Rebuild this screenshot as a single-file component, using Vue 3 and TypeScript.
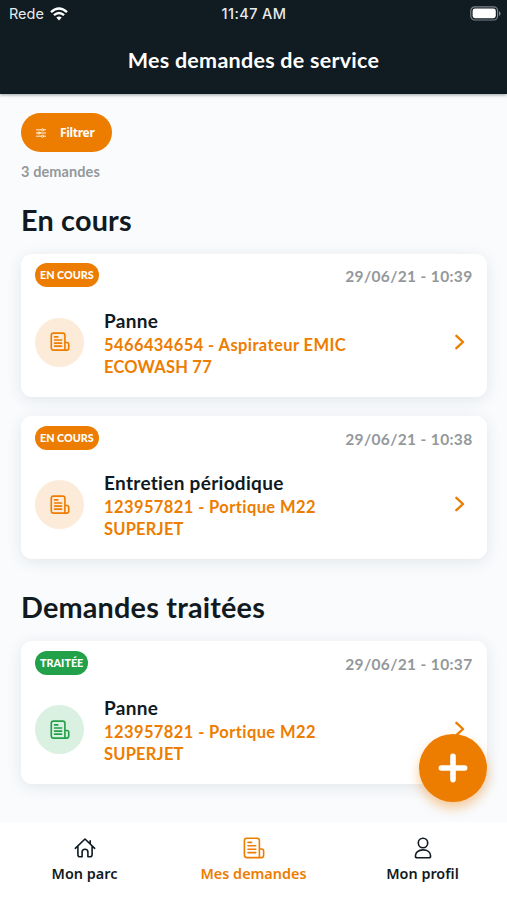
<script setup lang="ts">
interface ServiceRequest {
  id: number
  status: string
  done: boolean
  date: string
  title: string
  reference: string
  model: string
}

interface Section {
  title: string
  items: ServiceRequest[]
}

const sections: Section[] = [
  {
    title: 'En cours',
    items: [
      { id: 1, status: 'EN COURS', done: false, date: '29/06/21 - 10:39', title: 'Panne', reference: '5466434654 - Aspirateur EMIC', model: 'ECOWASH 77' },
      { id: 2, status: 'EN COURS', done: false, date: '29/06/21 - 10:38', title: 'Entretien périodique', reference: '123957821 - Portique M22', model: 'SUPERJET' },
    ],
  },
  {
    title: 'Demandes traitées',
    items: [
      { id: 3, status: 'TRAITÉE', done: true, date: '29/06/21 - 10:37', title: 'Panne', reference: '123957821 - Portique M22', model: 'SUPERJET' },
    ],
  },
]
</script>

<template>
  <div class="screen">
    <header class="header">
      <div class="status">
        <div class="carrier">
          <span>Rede</span>
          <svg class="wifi" viewBox="0 0 18 14" width="18" height="14">
            <path d="M1 5.1Q9-2.1 17 5.1" /><path d="M3.9 8.2Q9 3.7 14.1 8.2" />
            <path class="dot" d="M6.3 10.6Q9 8.3 11.7 10.6L9 13.5Z" />
          </svg>
        </div>
        <span class="clock">11:47 AM</span>
        <svg class="battery" viewBox="0 0 31 15" width="31" height="15">
          <rect class="shell" x=".8" y=".8" width="26.8" height="13.2" rx="4" />
          <rect class="charge" x="2.6" y="2.6" width="23.2" height="9.6" rx="2.4" />
          <path class="tip" d="M29 5q1.6 1 1.6 2.5T29 10Z" />
        </svg>
      </div>
      <h1>Mes demandes de service</h1>
    </header>

    <main class="content">
      <button class="filter">
        <svg viewBox="0 0 10 10" width="10" height="10">
          <path d="M0 1.8h10M0 5h10M0 8.2h10" />
          <circle cx="6.6" cy="1.8" r="1.1" /><circle cx="3" cy="5" r="1.1" /><circle cx="6.6" cy="8.2" r="1.1" />
        </svg>
        <span>Filtrer</span>
      </button>
      <p class="count">3 demandes</p>

      <section v-for="section in sections" :key="section.title">
        <h2>{{ section.title }}</h2>
        <article v-for="item in section.items" :key="item.id" class="card" :class="{ done: item.done }">
          <div class="top">
            <span class="badge">{{ item.status }}</span>
            <time>{{ item.date }}</time>
          </div>
          <div class="body">
            <div class="disc">
              <svg class="doc" viewBox="0 0 22 22" width="20" height="20">
                <path d="M16.4 20H4Q1.4 20 1.4 17.4V3.6Q1.4 1.2 3.8 1.2H14Q16.4 1.2 16.4 3.6V20H18.2Q20.6 20 20.6 17.6V13.6Q20.6 11.6 18.6 11.6H16.4" />
                <path d="M5 5.4h3.6M5 8.8h7.8M5 12.2h7.8M5 15.6h7.8" />
              </svg>
            </div>
            <div class="text">
              <h3>{{ item.title }}</h3>
              <p class="reference">{{ item.reference }}</p>
              <p>{{ item.model }}</p>
            </div>
            <svg class="chevron" viewBox="0 0 10 16" width="10" height="16"><path d="M1.4 1.8 8 8 1.4 14.2" /></svg>
          </div>
        </article>
      </section>
    </main>

    <nav class="tabs">
      <a class="tab">
        <svg viewBox="0 0 22 22" width="22" height="22">
          <path d="M1.3 11.3 11 2l9.7 9.3M16.2 6.8V3.8M3.9 9.4v8.4q0 2 2 2h2.2V15q0-2.8 2.9-2.8t2.9 2.8v4.8h2.2q2 0 2-2V9.4" />
        </svg>
        <span>Mon parc</span>
      </a>
      <a class="tab active">
        <svg viewBox="0 0 22 22" width="22" height="22">
          <path d="M16.4 20.6H4Q1.4 20.6 1.4 18V3.6Q1.4 1.2 3.8 1.2H14Q16.4 1.2 16.4 3.6V20.6H18.2Q20.6 20.6 20.6 18.2V14Q20.6 12 18.6 12H16.4" />
          <path d="M5 5.4h3.6M5 8.8h7.8M5 12.2h7.8M5 15.6h7.8" />
        </svg>
        <span>Mes demandes</span>
      </a>
      <a class="tab">
        <svg viewBox="0 0 22 22" width="22" height="22">
          <circle cx="11" cy="6" r="4.7" />
          <path d="M11 12.9c-4.6 0-7.6 2.6-7.6 6q0 1.8 1.8 1.8h11.6q1.8 0 1.8-1.8c0-3.4-3-6-7.6-6Z" />
        </svg>
        <span>Mon profil</span>
      </a>
    </nav>

    <button class="fab" aria-label="Ajouter">
      <svg viewBox="0 0 30 30" width="30" height="30"><path d="M15 3.4v23.2M3.4 15h23.2" /></svg>
    </button>
  </div>
</template>

<style>
body {
  margin: 0;
  background: #f9fbfd;
}
</style>

<style scoped>
.screen {
  position: relative;
  display: flex;
  flex-direction: column;
  width: 507px;
  height: 900px;
  overflow: hidden;
  background: #f9fbfd;
  color: #101a20;
  font-family: Lato, "Liberation Sans", sans-serif;
  font-variant-ligatures: none;
}

h1, h2, h3, p {
  margin: 0;
}

button {
  border: 0;
  padding: 0;
  font-family: inherit;
}

svg {
  display: block;
  flex: none;
  fill: none;
  stroke: currentColor;
  stroke-linecap: round;
  stroke-linejoin: round;
}

.header {
  flex: none;
  height: 93.5px;
  background: #101b22;
  color: #fff;
  box-shadow: 0 1px 3px rgba(16, 27, 34, 0.4);
}

.status {
  display: grid;
  grid-template-columns: 1fr auto 1fr;
  align-items: center;
  height: 27px;
  padding: 0 6px 0 9px;
  font-family: Inter, sans-serif;
  font-size: 14.5px;
  color: #e7eaec;
}

.carrier {
  display: flex;
  align-items: center;
  gap: 6px;
}

.wifi {
  stroke-width: 2.3;
  stroke-linecap: butt;
  color: #fff;
}

.dot {
  fill: #fff;
  stroke: none;
}

.clock {
  position: relative;
  left: -1px;
  font-weight: 500;
  letter-spacing: 0.4px;
}

.battery {
  justify-self: end;
}

.shell {
  stroke: #7c8387;
  stroke-width: 1.2;
}

.charge {
  fill: #fff;
  stroke: none;
}

.tip {
  fill: #7c8387;
  stroke: none;
}

h1 {
  line-height: 28px;
  padding-top: 19px;
  text-align: center;
  font-size: 21.5px;
  font-weight: 700;
  letter-spacing: 0.26px;
}

.content {
  flex: 1;
  min-height: 0;
  padding: 19.5px 20px 0 21px;
}

.filter {
  display: flex;
  align-items: center;
  gap: 14px;
  width: 91px;
  height: 39px;
  padding-left: 15px;
  border-radius: 20px;
  background: #ed7d00;
  color: #fff;
  font-family: "Noto Sans", sans-serif;
  font-size: 12px;
  font-weight: 700;
  letter-spacing: -0.3px;
}

.filter svg {
  stroke-width: 0.9;
}

.filter circle {
  fill: #ed7d00;
}

.count {
  height: 20px;
  margin-top: 10px;
  line-height: 20px;
  font-size: 14.5px;
  font-weight: 700;
  letter-spacing: 0.1px;
  color: #93989b;
}

h2 {
  height: 40px;
  margin-top: 18px;
  margin-bottom: 13.8px;
  line-height: 40px;
  font-size: 28.8px;
  font-weight: 700;
  letter-spacing: 0.2px;
}

section + section h2 {
  margin-top: 28.2px;
}

.card {
  box-sizing: border-box;
  height: 142.8px;
  padding: 9.5px 14.5px 0 14px;
  border-radius: 11px;
  background: #fff;
  box-shadow: 0 3px 15px rgba(40, 60, 70, 0.1);
  --accent: #ed7d00;
  --tint: #fdebd9;
}

.card.done {
  --accent: #22a04a;
  --tint: #daf0e1;
}

.card + .card {
  margin-top: 19.8px;
}

.top {
  display: flex;
  justify-content: space-between;
  height: 24px;
}

.badge {
  padding: 0 5px;
  border-radius: 12px;
  background: var(--accent);
  color: #fff;
  line-height: 24px;
  font-size: 10.8px;
  font-weight: 900;
}

time {
  line-height: 26px;
  font-size: 15.5px;
  font-weight: 700;
  letter-spacing: 0.35px;
  color: #93989b;
}

.body {
  display: flex;
  padding-top: 20.5px;
}

.disc {
  display: flex;
  align-items: center;
  justify-content: center;
  width: 49px;
  height: 49px;
  margin-top: 10px;
  border-radius: 50%;
  background: var(--tint);
  color: var(--accent);
}

.doc {
  stroke-width: 1.8;
}

.text {
  flex: 1;
  margin-left: 20px;
}

h3 {
  height: 26px;
  line-height: 26px;
  font-size: 19px;
  font-weight: 700;
  letter-spacing: 0.3px;
}

.text p {
  line-height: 22px;
  font-size: 16.5px;
  font-weight: 700;
  letter-spacing: 0.2px;
  color: #ed7d00;
}

.text .reference {
  letter-spacing: 0.4px;
}

.chevron {
  margin-top: 26px;
  margin-right: 7.5px;
  color: #ed7d00;
  stroke-width: 2.4;
}

.tabs {
  display: grid;
  grid-template-columns: repeat(3, 1fr);
  flex: none;
  height: 78px;
  background: #fff;
}

.tab {
  display: flex;
  flex-direction: column;
  align-items: center;
  padding-top: 15px;
  font-family: "Noto Sans", sans-serif;
  font-size: 14.4px;
  font-weight: 600;
}

.tab svg {
  stroke-width: 1.6;
}

.tab span {
  line-height: 20px;
  margin-top: 5px;
}

.tab.active {
  color: #ed7d00;
}

.fab {
  position: absolute;
  top: 734px;
  left: 419px;
  display: flex;
  align-items: center;
  justify-content: center;
  width: 68px;
  height: 68px;
  border-radius: 50%;
  background: #ed7d00;
  color: #fff;
  box-shadow: 0 6px 12px rgba(237, 125, 0, 0.4);
}

.fab svg {
  stroke-width: 5.6;
}
</style>
